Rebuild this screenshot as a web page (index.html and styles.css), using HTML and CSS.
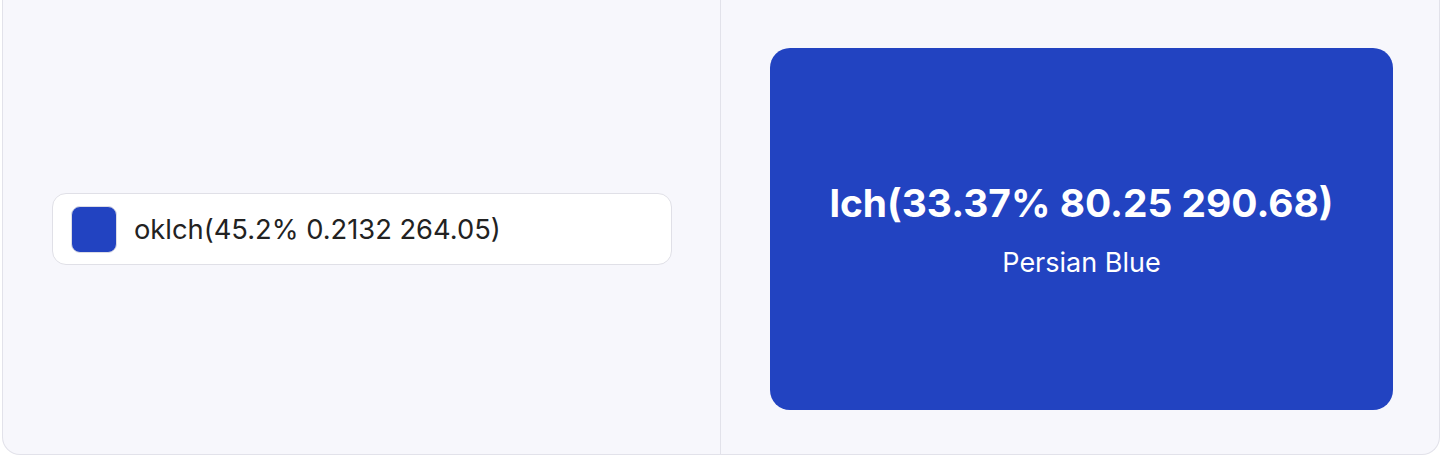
FILE: index.html
```html
<!DOCTYPE html>
<html lang="en">
<head>
    <meta charset="UTF-8">
    <meta name="viewport" content="width=device-width, initial-scale=1.0">
    <title>Color Converter</title>
    <link rel="stylesheet" href="styles.css">
</head>
<body>
    <!-- Converter panel -->
    <div class="converter">
        <!-- Input side -->
        <section class="pane pane-input">
            <div class="color-field">
                <span class="swatch"></span>
                <span class="color-value">oklch(45.2% 0.2132 264.05)</span>
            </div>
        </section>

        <!-- Result side -->
        <section class="pane pane-result">
            <div class="result-card">
                <h2>lch(33.37% 80.25 290.68)</h2>
                <p>Persian Blue</p>
            </div>
        </section>
    </div>
</body>
</html>
```

FILE: styles.css
```css
* {
    margin: 0;
    padding: 0;
    box-sizing: border-box;
}

body {
    font-family: 'Inter', 'Noto Sans', sans-serif;
    background-color: #ffffff;
    color: #222;
    height: 456px;
    overflow: hidden;
}

/* Outer converter box */
.converter {
    display: flex;
    height: 455px;
    margin-left: 2px;
    background-color: #f7f7fc;
    border: 1.5px solid #e2e2ea;
    border-top: none;
    border-radius: 0 0 18px 18px;
}

.pane {
    display: flex;
    align-items: center;
    justify-content: center;
}

.pane-input {
    flex: 0 0 718px;
    padding: 4px 48px 0 49px;
    border-right: 1.5px solid #e2e2ea;
}

.pane-result {
    flex: 1;
    padding: 48px 46px 44px 49px;
}

/* Color input */
.color-field {
    width: 100%;
    height: 72px;
    display: flex;
    align-items: center;
    gap: 17px;
    padding: 0 18px;
    background-color: #fff;
    border: 1.5px solid #e0e0e7;
    border-radius: 14px;
}

.swatch {
    flex: 0 0 46px;
    height: 47px;
    background-color: #2243c1;
    border: 1.5px solid #dcdce6;
    border-radius: 9px;
}

.color-value {
    font-size: 27.3px;
    color: #222;
}

/* Result card */
.result-card {
    width: 100%;
    height: 100%;
    display: flex;
    flex-direction: column;
    align-items: center;
    justify-content: center;
    gap: 20px;
    background-color: #2243c1;
    color: #fff;
    border-radius: 20px;
}

.result-card h2 {
    font-size: 38.9px;
    font-weight: 700;
    line-height: 1.2;
    margin-top: 2px;
}

.result-card p {
    font-size: 27px;
    line-height: 1.2;
}
```
